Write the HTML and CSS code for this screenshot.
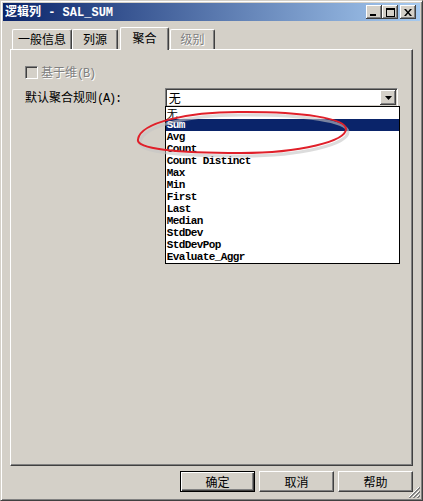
FILE: index.html
```html
<!DOCTYPE html>
<html lang="zh">
<head>
<meta charset="utf-8">
<title>逻辑列 - SAL_SUM</title>
<link rel="stylesheet" href="styles.css">
</head>
<body>
<div class="window">
  <div class="titlebar">
    <span class="title">逻辑列<span class="mono"> - SAL_SUM</span></span>
    <div class="tbtns">
      <span class="tbtn"><svg width="8" height="7" viewBox="0 0 8 7"><rect x="0" y="5" width="6" height="2" fill="#000"/></svg></span>
      <span class="tbtn"><svg width="9" height="9" viewBox="0 0 9 9"><rect x="0.5" y="0.5" width="8" height="8" fill="none" stroke="#000"/><rect x="0" y="0" width="9" height="2" fill="#000"/></svg></span>
      <span class="tbtn close"><svg width="8" height="7" viewBox="0 0 8 7"><path d="M0 0h2l2 2.5L6 0h2L5 3.5 8 7H6L4 4.5 2 7H0l3-3.5z" fill="#000"/></svg></span>
    </div>
  </div>
  <div class="client">
    <div class="tabs">
      <div class="tab t1">一般信息</div>
      <div class="tab t2">列源</div>
      <div class="tab t3 active">聚合</div>
      <div class="tab t4 disabled">级别</div>
    </div>
    <div class="panel">
      <div class="check-row">
        <span class="checkbox"></span>
        <span class="dis">基于维<span class="hw">(B)</span></span>
      </div>
      <div class="rule-row">
        <span class="rule-label">默认聚合规则<span class="hw">(A):</span></span>
        <div class="combo">
          <span class="combo-text">无</span>
          <span class="combo-btn"><svg width="7" height="4" viewBox="0 0 7 4"><path d="M0 0h7L3.5 4z" fill="#000"/></svg></span>
          <ul class="droplist">
            <li class="cjk">无</li>
            <li class="sel">Sum</li>
            <li>Avg</li>
            <li>Count</li>
            <li>Count Distinct</li>
            <li>Max</li>
            <li>Min</li>
            <li>First</li>
            <li>Last</li>
            <li>Median</li>
            <li>StdDev</li>
            <li>StdDevPop</li>
            <li>Evaluate_Aggr</li>
          </ul>
        </div>
      </div>
    </div>
    <div class="buttons">
      <button class="btn default">确定</button>
      <button class="btn">取消</button>
      <button class="btn">帮助</button>
    </div>
  </div>
  <svg class="grip" width="12" height="12" viewBox="0 0 12 12">
    <path d="M11 1L1 11M11 5L5 11M11 9L9 11" stroke="#fff" stroke-width="1"/>
    <path d="M12 1L1 12M12 2L2 12M12 5L5 12M12 6L6 12M12 9L9 12M12 10L10 12" stroke="#808080" stroke-width="1"/>
  </svg>
  <svg class="annot" width="423" height="501" viewBox="0 0 423 501">
    <path d="M137 138C140 122 185 110 245 111C300 111 345 117 345 128C345 140 300 152 240 152C175 152 134 148 137 138Z" transform="translate(2 3)" fill="none" stroke="#c4c4c4" stroke-width="3" opacity="0.6"/>
    <path d="M137 138C140 122 185 110 245 111C300 111 345 117 345 128C345 140 300 152 240 152C175 152 134 148 137 138Z" fill="none" stroke="#e0202a" stroke-width="2"/>
  </svg>
</div>
</body>
</html>
```
FILE: styles.css
```css
* { box-sizing: border-box; }
html, body { margin: 0; padding: 0; }
body {
  width: 423px;
  height: 501px;
  overflow: hidden;
  background: #d4d0c8;
  font-family: "Noto Sans CJK SC", "Liberation Sans", sans-serif;
  font-size: 12px;
  color: #000;
}
.window {
  position: relative;
  width: 423px;
  height: 501px;
  background: #d4d0c8;
  border: 1px solid;
  border-color: #d4d0c8 #404040 #404040 #d4d0c8;
  box-shadow: inset 1px 1px #fff, inset -1px -1px #808080;
  padding: 2px;
  display: flex;
  flex-direction: column;
}
.titlebar {
  height: 18px;
  background: linear-gradient(to right, #0a246a, #a6caf0);
  display: flex;
  align-items: center;
  padding: 0 4px 0 2px;
}
.title {
  flex: 1;
  color: #fff;
  font-weight: bold;
  font-size: 12px;
  line-height: 18px;
  white-space: pre;
}
.title .mono { font-family: "Liberation Mono", monospace; font-size: 12px; }
.tbtns { display: flex; }
.tbtn {
  width: 16px;
  height: 14px;
  background: #d4d0c8;
  box-shadow: inset -1px -1px #404040, inset 1px 1px #fff, inset -2px -2px #808080;
  display: flex;
  align-items: center;
  justify-content: center;
}
.tbtn.close { margin-left: 2px; }

.client {
  flex: 1;
  display: flex;
  flex-direction: column;
  padding: 6px 7px 0 7px;
}
.tabs {
  display: flex;
  align-items: flex-end;
  height: 22px;
  padding-left: 2px;
  position: relative;
  z-index: 1;
}
.tab {
  height: 20px;
  background: #d4d0c8;
  border-left: 1px solid #fff;
  border-top: 1px solid #fff;
  border-right: 1px solid #404040;
  border-radius: 2px 2px 0 0;
  box-shadow: inset -1px 0 #808080;
  text-align: center;
  line-height: 18px;
  font-size: 12px;
}
.t1 { width: 60px; }
.t2 { width: 46px; }
.t3 { width: 49px; margin-left: 2px; }
.t4 { width: 45px; margin-left: 1px; }
.tab.active {
  height: 23px;
  margin-bottom: -1px;
  line-height: 20px;
}
.tab.disabled { color: #808080; text-shadow: 1px 1px #fff; }

.hw {
  font-family: "Liberation Mono", monospace;
  font-size: 12px;
  letter-spacing: -1.2px;
}

.panel {
  height: 417px;
  border: 1px solid;
  border-color: #fff #404040 #404040 #fff;
  box-shadow: inset -1px -1px #808080;
  padding: 16px 14px;
}
.check-row {
  display: flex;
  align-items: center;
  height: 13px;
  gap: 3px;
}
.checkbox {
  width: 13px;
  height: 13px;
  background: #d4d0c8;
  border: 1px solid;
  border-color: #808080 #fff #fff #808080;
  box-shadow: inset 1px 1px #404040;
}
.dis { color: #808080; text-shadow: 1px 1px #fff; line-height: 13px; }

.rule-row {
  display: flex;
  align-items: center;
  margin-top: 9px;
  height: 19px;
}
.rule-label { width: 140px; line-height: 19px; }
.combo {
  position: relative;
  width: 234px;
  height: 19px;
  background: #fff;
  border: 1px solid;
  border-color: #808080 #fff #fff #808080;
  box-shadow: inset 1px 1px #404040, inset -1px -1px #d4d0c8;
  padding: 1px;
  display: flex;
  align-items: center;
}
.combo-text { flex: 1; padding-left: 2px; line-height: 15px; }
.combo-btn {
  width: 16px;
  height: 15px;
  background: #d4d0c8;
  box-shadow: inset -1px -1px #404040, inset 1px 1px #fff, inset -2px -2px #808080;
  display: flex;
  align-items: center;
  justify-content: center;
}
.droplist {
  position: absolute;
  top: 17px;
  left: -1px;
  width: 235px;
  margin: 0;
  padding: 0;
  list-style: none;
  background: #fff;
  border: 1px solid #000;
}
.droplist li {
  height: 12px;
  line-height: 12px;
  padding-left: 1px;
  font-family: "Liberation Mono", "Noto Sans CJK SC", monospace;
  font-size: 11px;
  font-weight: bold;
  letter-spacing: -0.6px;
  white-space: pre;
}
.droplist li.cjk { font-family: "Noto Sans CJK SC", sans-serif; font-weight: normal; font-size: 11px; letter-spacing: 0; }
.droplist li.sel { background: #0a246a; color: #fff; }

.buttons {
  display: flex;
  justify-content: flex-end;
  gap: 4px;
  margin-top: 5px;
}
.btn {
  width: 75px;
  height: 21px;
  padding: 0;
  margin: 0;
  font-family: "Noto Sans CJK SC", sans-serif;
  font-size: 12px;
  color: #000;
  background: #d4d0c8;
  border: 1px solid;
  border-color: #fff #404040 #404040 #fff;
  box-shadow: inset -1px -1px #808080;
}
.btn.default {
  border-color: #000;
  box-shadow: inset 1px 1px #fff, inset -1px -1px #404040, inset -2px -2px #808080;
}
.grip {
  position: absolute;
  right: 2px;
  bottom: 2px;
}
.annot {
  position: absolute;
  top: 0;
  left: 0;
  pointer-events: none;
}
```
